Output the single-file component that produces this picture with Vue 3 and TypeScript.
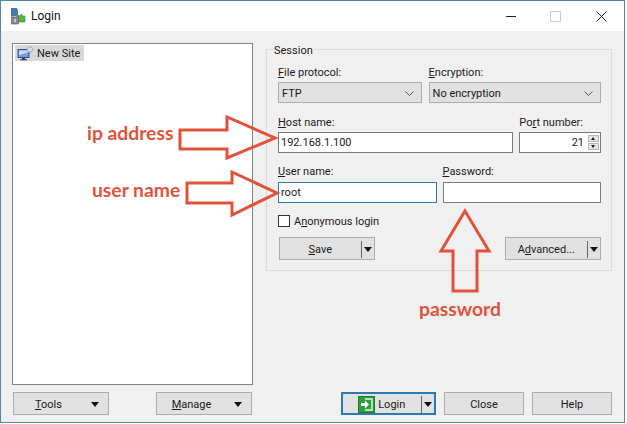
<script setup lang="ts">
const arrows: string[] = [
  '180,130 227,130 227,117 275,138 227,158 227,149 180,149',
  '187,183 232,183 232,172 277,193 232,215 232,203 187,203',
  '465,211 489,251 477,251 477,291 453,291 453,251 441,251'
]
</script>

<template>
  <div class="win">
    <header class="title">
      <svg class="app-ico" viewBox="0 0 17 17" width="17" height="17">
        <path d="M2 0h6l1 3v5H2z" fill="#3f78b8" />
        <path d="M8 6l2 2 3-2v2h3v6H9z" fill="#55b848" stroke="#2f8a30" stroke-width=".6" />
        <path d="M4 9V7.500a2 2 0 0 1 4 0V9" fill="none" stroke="#777" stroke-width="1.200" />
        <rect x="2.500" y="9" width="7" height="7" fill="#8d8d8d" stroke="#555" stroke-width=".6" />
        <rect x="5.500" y="11" width="1.200" height="3" fill="#eee" />
      </svg>
      <span class="title-text">Login</span>
      <div class="caption">
        <span class="cap-min"></span>
        <span class="cap-box"></span>
        <svg class="cap-x" viewBox="0 0 11 11" width="11" height="11">
          <path d="M.5.500l10 10M10.500.500l-10 10" stroke="#222" stroke-width="1" fill="none" />
        </svg>
      </div>
    </header>

    <main class="body">
      <div class="top">
        <section class="tree">
          <div class="tree-item">
            <svg viewBox="0 0 17 15" width="17" height="15">
              <rect x="1" y="3.500" width="11" height="8" fill="#6f9fe6" stroke="#334d78" />
              <path d="M2 4.500h9v2L2 9z" fill="#c7dcf7" />
              <path d="M5 12h3v1.200h2v1H3v-1h2z" fill="#2e3c55" />
              <circle cx="13" cy="3.500" r="2.800" fill="#d5dbe4" stroke="#9aa5b5" stroke-width=".8" />
            </svg>
            <span>New Site</span>
          </div>
        </section>

        <section class="session">
          <span class="legend">Session</span>
          <div class="row two-sel">
            <div class="field">
              <label><u>F</u>ile protocol:</label>
              <div class="select">
                <span>FTP</span>
                <svg viewBox="0 0 9 5" width="9" height="5"><path d="M.5.500l4 4 4-4" fill="none" stroke="#555" /></svg>
              </div>
            </div>
            <div class="field">
              <label><u>E</u>ncryption:</label>
              <div class="select">
                <span>No encryption</span>
                <svg viewBox="0 0 9 5" width="9" height="5"><path d="M.5.500l4 4 4-4" fill="none" stroke="#555" /></svg>
              </div>
            </div>
          </div>
          <div class="row host-row">
            <div class="field">
              <label><u>H</u>ost name:</label>
              <input class="inp" value="192.168.1.100" />
            </div>
            <div class="field">
              <label>Po<u>r</u>t number:</label>
              <div class="spin">
                <span>21</span>
                <div class="spin-btns">
                  <i class="up"></i>
                  <i class="down"></i>
                </div>
              </div>
            </div>
          </div>
          <div class="row user-row">
            <div class="field">
              <label><u>U</u>ser name:</label>
              <input class="inp focus" value="root" />
            </div>
            <div class="field">
              <label><u>P</u>assword:</label>
              <input class="inp" type="password" />
            </div>
          </div>
          <div class="check">
            <span class="box"></span>
            <span>A<u>n</u>onymous login</span>
          </div>
          <div class="session-actions">
            <button class="btn split wide"><span class="lbl"><u>S</u>ave</span><i class="sep"></i><i class="tri"></i></button>
            <button class="btn split wide"><span class="lbl">A<u>d</u>vanced...</span><i class="sep"></i><i class="tri"></i></button>
          </div>
        </section>
      </div>

      <footer class="bottom">
        <div class="left-btns">
          <button class="btn menu wide"><span class="lbl"><u>T</u>ools</span><i class="tri"></i></button>
          <button class="btn menu wide"><span class="lbl"><u>M</u>anage</span><i class="tri"></i></button>
        </div>
        <div class="right-btns">
          <button class="btn split login">
            <span class="lbl with-ico">
              <svg viewBox="0 0 17 17" width="17" height="17">
                <rect x=".5" y=".5" width="16" height="16" fill="#2f9e3f" stroke="#1f7a30" />
                <path d="M7 3h7v11H7" fill="none" stroke="#e8f6e8" stroke-width="1.400" />
                <path d="M3 7h4V4.500L11 8.500l-4 4V10H3z" fill="#fff" />
              </svg>
              <span>Login</span>
            </span>
            <i class="sep"></i><i class="tri"></i>
          </button>
          <button class="btn plain">Close</button>
          <button class="btn plain">Help</button>
        </div>
      </footer>
    </main>

    <svg class="overlay" viewBox="0 0 627 424" width="627" height="424">
      <polygon v-for="a in arrows" :key="a" :points="a" fill="none" stroke="#e0533a" stroke-width="3" />
    </svg>
    <span class="note n1">ip address</span>
    <span class="note n2">user name</span>
    <span class="note n3">password</span>
  </div>
</template>

<style>
html, body { margin: 0; background: #fff; }
</style>

<style scoped>
.win {
  position: relative;
  width: 625px;
  height: 423px;
  box-sizing: border-box;
  border: 1px solid #4d8ca6;
  background: #f0f0f0;
  font-family: Roboto, "Noto Sans", sans-serif;
  font-size: 11px;
  color: #1a1a1a;
  display: flex;
  flex-direction: column;
}
.title {
  height: 30px;
  flex: none;
  background: #fff;
  display: flex;
  align-items: center;
  padding-left: 8px;
}
.title-text { font-size: 12px; margin-left: 5px; color: #111; }
.caption { margin-left: auto; display: flex; align-items: center; padding-right: 17px; }
.cap-min { width: 10px; height: 1px; background: #222; margin-right: 34px; }
.cap-box { width: 9px; height: 9px; border: 1px solid #ccc; margin-right: 35px; }
.cap-x { display: block; }

.body {
  flex: 1;
  padding: 12px 12px 7px 11px;
  display: flex;
  flex-direction: column;
}
.top { display: flex; height: 342px; flex: none; gap: 13px; }
.tree {
  width: 241px;
  box-sizing: border-box;
  border: 1px solid #828282;
  background: #fff;
  padding: 1px 2px;
}
.tree-item {
  display: inline-flex;
  align-items: center;
  gap: 3px;
  height: 16px;
  width: 69px;
  background: #d9d9d9;
  padding-left: 2px;
  box-sizing: border-box;
}
.session {
  position: relative;
  width: 346px;
  height: 222px;
  margin-top: 6px;
  box-sizing: border-box;
  border: 1px solid #dcdcdc;
  padding: 15px 10px 0 11px;
}
.legend {
  position: absolute;
  top: -6px;
  left: 6px;
  background: #f0f0f0;
  padding: 0 1px;
  line-height: 14px;
}
.row { display: flex; gap: 7px; }
.field { display: flex; flex-direction: column; }
.field label { line-height: 16px; height: 17px; }
.two-sel .field:first-child { width: 144px; }
.two-sel .field:last-child { width: 173px; }
.host-row { margin-top: 12px; gap: 6px; }
.host-row .field:first-child { width: 236px; }
.host-row .field:last-child { width: 82px; }
.user-row { margin-top: 11px; gap: 6px; }
.user-row .field { width: 159px; }
.user-row label { height: 18px; }
.select {
  height: 21px;
  box-sizing: border-box;
  border: 1px solid #adadad;
  background: #e1e1e1;
  display: flex;
  align-items: center;
  justify-content: space-between;
  padding: 1px 7px 0 3px;
}
.inp {
  height: 21px;
  width: 100%;
  box-sizing: border-box;
  border: 1px solid #7a7a7a;
  background: #fff;
  font: inherit;
  color: inherit;
  padding: 0 2px;
  outline: none;
}
.focus { border-color: #2a7ca8; }
.spin {
  height: 21px;
  box-sizing: border-box;
  border: 1px solid #7a7a7a;
  background: #fff;
  display: flex;
  align-items: center;
  justify-content: flex-end;
  gap: 4px;
  padding-right: 1px;
}
.spin-btns { display: flex; flex-direction: column; gap: 1px; }
.spin-btns i {
  width: 11px;
  height: 7px;
  background: #e6e6e6;
  border: 1px solid #b5b5b5;
  box-sizing: border-box;
  display: block;
  position: relative;
}
.spin-btns i::after {
  content: "";
  position: absolute;
  left: 2px;
  border-left: 2.500px solid transparent;
  border-right: 2.500px solid transparent;
}
.up::after { top: 1px; border-bottom: 3px solid #222; }
.down::after { top: 1px; border-top: 3px solid #222; }
.check { display: flex; align-items: center; gap: 4px; margin-top: 12px; height: 12px; }
.box { width: 12px; height: 12px; box-sizing: border-box; border: 1px solid #333; background: #fff; }
.session-actions {
  display: flex;
  justify-content: space-between;
  margin: 10px 0 0 1px;
  width: 322px;
}
.btn {
  font: inherit;
  color: inherit;
  height: 23px;
  padding: 1px 0 0;
  box-sizing: border-box;
  border: 1px solid #adadad;
  background: #e1e1e1;
  display: flex;
  align-items: center;
  position: relative;
}
.wide { width: 96px; }
.lbl { flex: 1; text-align: center; }
.with-ico { display: flex; align-items: center; justify-content: center; gap: 3px; }
.tri {
  width: 0;
  height: 0;
  border-left: 4.500px solid transparent;
  border-right: 4.500px solid transparent;
  border-top: 5px solid #111;
  flex: none;
}
.split .sep {
  width: 1.500px;
  height: 17px;
  background: #666;
  margin-right: 2px;
  flex: none;
}
.split .tri { margin-right: 2px; }
.menu .lbl { padding-right: 8px; }
.menu .tri { margin-right: 9px; }
.bottom { display: flex; justify-content: space-between; margin-top: 7px; padding-left: 1px; }
.left-btns { display: flex; gap: 47px; }
.right-btns { display: flex; gap: 8px; }
.login { width: 95px; border: 2px solid #2a7cb0; }
.plain { width: 80px; justify-content: center; }
.overlay { position: absolute; left: -1px; top: -1px; pointer-events: none; }
.note {
  position: absolute;
  font-family: Lato, "Open Sans", sans-serif;
  font-weight: 700;
  font-size: 19.3px;
  line-height: 22px;
  color: #e0533a;
  white-space: nowrap;
}
.n1 { left: 86px; top: 121px; }
.n2 { left: 91px; top: 178px; }
.n3 { left: 418px; top: 297px; }
</style>
